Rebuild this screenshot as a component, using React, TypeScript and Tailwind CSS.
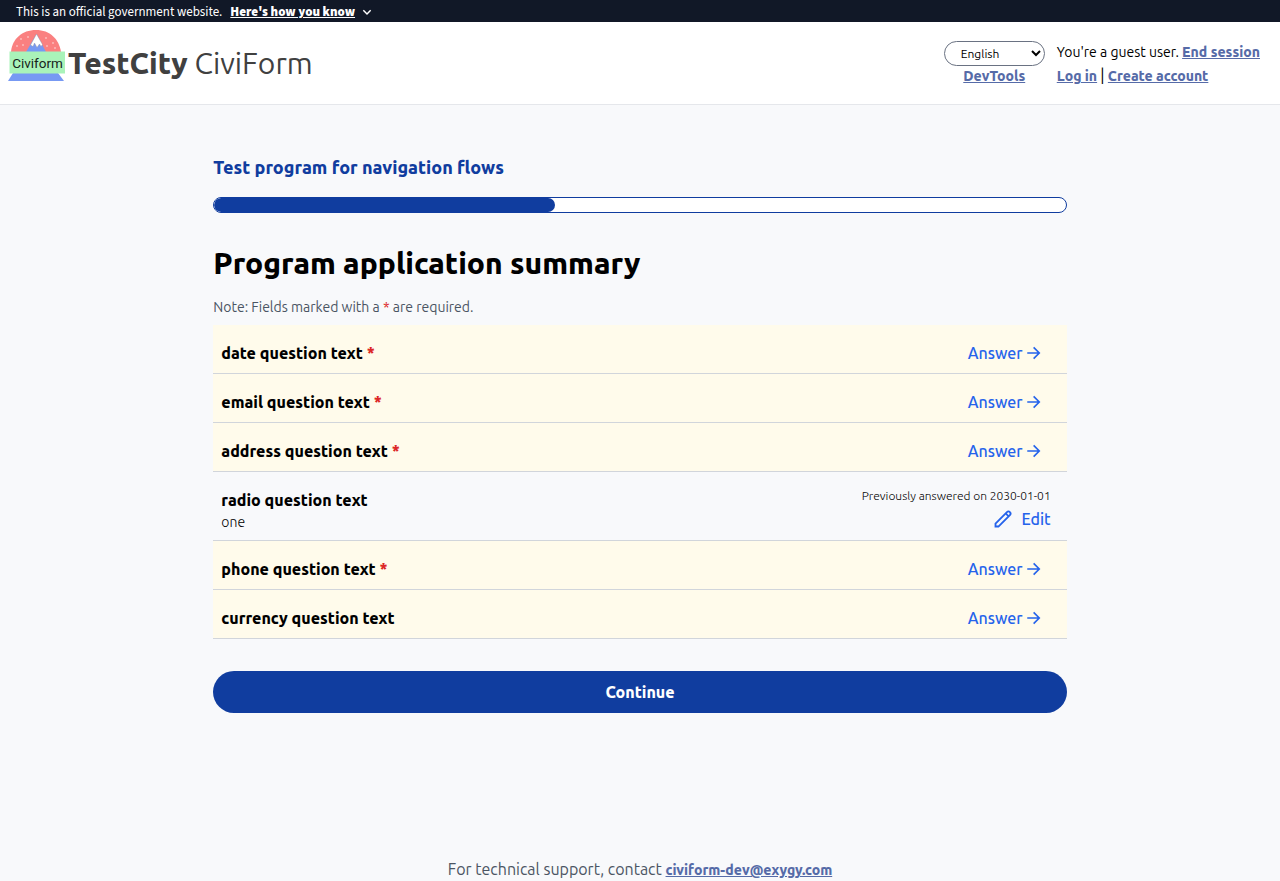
import type { ReactNode } from "react";

type Question = {
  text: string;
  required?: boolean;
  answer?: string;
  answeredOn?: string;
};

const questions: Question[] = [
  { text: "date question text", required: true },
  { text: "email question text", required: true },
  { text: "address question text", required: true },
  { text: "radio question text", answer: "one", answeredOn: "2030-01-01" },
  { text: "phone question text", required: true },
  { text: "currency question text" },
];

const linkClass = "text-sm font-extrabold text-[#566ba8] underline";

function Icon({ className, children }: { className: string; children: ReactNode }) {
  return (
    <svg
      className={className}
      viewBox="0 0 24 24"
      fill="none"
      stroke="currentColor"
      strokeWidth="2.2"
      aria-hidden="true"
    >
      {children}
    </svg>
  );
}

function Logo() {
  return (
    <svg
      className="h-[52px] w-[58px] shrink-0"
      viewBox="0 0 58 52"
      role="img"
      aria-label="Civiform logo"
    >
      <path d="M3 22C4 9 14 0 28 0s23 9 25 22z" fill="#fa8080" />
      <g fill="#fde2e2">
        <circle cx="13" cy="9" r="0.8" />
        <circle cx="20" cy="7" r="0.8" />
        <circle cx="15" cy="15" r="0.8" />
        <circle cx="9" cy="16" r="0.8" />
        <circle cx="38" cy="8" r="0.8" />
        <circle cx="45" cy="13" r="0.8" />
        <circle cx="39" cy="16" r="0.8" />
        <circle cx="47" cy="18" r="0.8" />
      </g>
      <path d="M18 22 28.500 4 38 22z" fill="#7799f3" />
      <path
        d="M28.500 4 22.500 15 25 16.500 26.500 13 29 17.500 31.500 14 33 16.500 34.500 14.500z"
        fill="#fff"
        stroke="#8b8b9b"
        strokeWidth="0.4"
      />
      <path d="M5 43h45l6 8H0z" fill="#7799f3" />
      <path d="M1.500 21.500H57V43.500H1.500z" fill="#a9f3b9" />
      <text
        x="29.500"
        y="37.500"
        textAnchor="middle"
        fill="#17231b"
        fontSize="13.500"
        fontFamily="Roboto, sans-serif"
      >
        Civiform
      </text>
    </svg>
  );
}

function QuestionRow({ question }: { question: Question }) {
  const { text, required, answer, answeredOn } = question;
  return (
    <li
      className={`flex justify-between border-b border-[#d1d5db] px-2 pt-4 ${
        answer ? "pb-2" : "bg-[#fffbeb] pb-1"
      }`}
    >
      <div>
        <h2 className="text-base leading-6 font-extrabold">
          {text}
          {required && <span className="text-[#dc2626]"> *</span>}
        </h2>
        {answer && <p className="text-sm leading-5 font-light text-black">{answer}</p>}
      </div>
      {answer ? (
        <div className="flex flex-col items-end pr-2">
          <p className="text-xs leading-4 font-light text-black">
            Previously answered on {answeredOn}
          </p>
          <a
            href="#edit"
            className="mt-[3px] flex items-center gap-2 text-base leading-6 font-medium text-[#2563eb]"
          >
            <Icon className="size-5">
              <path d="M15.232 5.232l3.536 3.536m-2.036-5.036a2.5 2.5 0 113.536 3.536L6.500 21.036H3v-3.572L16.732 3.732z" />
            </Icon>
            Edit
          </a>
        </div>
      ) : (
        <a
          href="#answer"
          className="mb-1 flex items-center gap-0.5 pr-4 text-base leading-6 font-medium text-[#2563eb]"
        >
          Answer
          <Icon className="size-[18px]">
            <path d="M3 12h16M11.500 4.500 19 12l-7.500 7.500" />
          </Icon>
        </a>
      )}
    </li>
  );
}

export default function App() {
  return (
    <div className="flex min-h-screen flex-col bg-[#f8f9fb] font-['Ubuntu','Noto_Sans',sans-serif] text-black">
      <div className="flex h-[22px] items-center gap-2 bg-[#111827] px-4 pt-0.5 font-['Source_Sans_Pro','Source_Sans_3','Noto_Sans_CJK_JP',sans-serif] text-[13px] leading-4 text-white">
        <span>This is an official government website.</span>
        <button type="button" className="flex items-center gap-1 font-black">
          <span className="underline">Here's how you know</span>
          <Icon className="size-4">
            <path d="M6.500 9.500 12 15l5.500-5.500" />
          </Icon>
        </button>
      </div>

      <header className="flex h-[83px] items-start justify-between border-b border-gray-200 bg-white px-2">
        <a href="#home" className="flex items-start gap-0.5 pt-2 text-[#404040]">
          <Logo />
          <span className="pt-[15px] text-3xl leading-9">
            <b className="font-extrabold">TestCity</b> CiviForm
          </span>
        </a>
        <div className="flex gap-3 pt-[19px] pr-3">
          <div className="flex flex-col items-center">
            <select
              aria-label="Language"
              defaultValue="en"
              className="h-[25px] w-[101px] rounded-full border border-gray-500 bg-white px-3 text-xs"
            >
              <option value="en">English</option>
              <option value="es">Español</option>
            </select>
            <a href="#devtools" className={linkClass}>
              DevTools
            </a>
          </div>
          <div className="text-sm leading-6">
            <p className="-mt-px">
              You're a guest user.{" "}
              <a href="#end" className={linkClass}>
                End session
              </a>
            </p>
            <p>
              <a href="#login" className={linkClass}>
                Log in
              </a>{" "}
              <span className="text-base leading-none">|</span>{" "}
              <a href="#create" className={linkClass}>
                Create account
              </a>
            </p>
          </div>
        </div>
      </header>

      <main className="mx-auto w-2/3 pt-12">
        <h2 className="text-lg leading-7 font-extrabold text-[#103d9f]">
          Test program for navigation flows
        </h2>
        <div
          role="progressbar"
          aria-label="Application progress"
          aria-valuenow={40}
          className="mt-4 h-4 overflow-hidden rounded-full border border-[#103d9f] bg-white"
        >
          <div className="h-full w-2/5 rounded-full bg-[#103d9f]" />
        </div>
        <h1 className="mt-8 text-3xl leading-9 font-extrabold">Program application summary</h1>
        <p className="mt-4 text-sm leading-5 text-[#4b5563]">
          Note: Fields marked with a <span className="text-[#dc2626]">*</span> are required.
        </p>
        <ul className="mt-2">
          {questions.map((question) => (
            <QuestionRow key={question.text} question={question} />
          ))}
        </ul>
        <button
          type="button"
          className="mt-8 w-full rounded-full bg-[#103d9f] py-[9px] text-base leading-6 font-extrabold text-white"
        >
          Continue
        </button>
      </main>

      <footer className="mt-auto text-center leading-6 text-[#4b5563]">
        For technical support, contact{" "}
        <a href="mailto:civiform-dev@exygy.com" className={linkClass}>
          civiform-dev@exygy.com
        </a>
      </footer>
    </div>
  );
}
